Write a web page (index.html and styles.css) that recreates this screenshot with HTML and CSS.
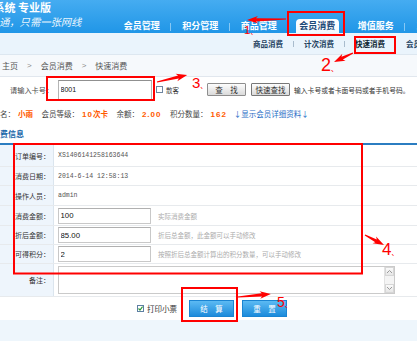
FILE: index.html
```html
<!DOCTYPE html>
<html lang="zh-CN">
<head>
<meta charset="utf-8">
<title>快速消费</title>
<link rel="stylesheet" href="styles.css">
</head>
<body>
<div class="page">
  <header class="topbar">
    <div class="brand">
      <div class="brand-title">会员管理系统 专业版</div>
      <div class="brand-sub">通，只需一张网线</div>
    </div>
    <nav class="mainnav">
      <a class="nav-item sep">会员管理</a>
      <a class="nav-item sep">积分管理</a>
      <a class="nav-item">商品管理</a>
      <a class="nav-item active"><span class="tab">会员消费</span></a>
      <a class="nav-item sep">增值服务</a>
      <a class="nav-item">系统设置</a>
    </nav>
  </header>

  <div class="subnav">
    <a class="sub-item sep">商品消费</a>
    <a class="sub-item sep">计次消费</a>
    <a class="sub-item sep current">快速消费</a>
    <a class="sub-item">会员充值</a>
  </div>

  <div class="crumbs">
    <span>主页</span><span class="gt">&gt;</span><span>会员消费</span><span class="gt">&gt;</span><span>快速消费</span>
  </div>

  <div class="search">
    <span class="search-label">请输入卡号：</span>
    <input class="card-input" value="8001">
    <span class="box"></span>
    <span class="guest">散客</span>
    <button class="btn-gray find">查　找</button>
    <button class="btn-gray quick">快速查找</button>
    <span class="search-hint">输入卡号或者卡面号码或者手机号码。</span>
  </div>

  <div class="member">
    <span class="grp first"><span class="mlbl">姓名：</span><b class="val">小雨</b></span>
    <span class="grp"><span class="mlbl">会员等级：</span><b class="val"><span class="digits">10</span>次卡</b></span>
    <span class="grp"><span class="mlbl">余额：</span><b class="val digits">2.00</b></span>
    <span class="grp"><span class="mlbl">积分数量：</span><b class="val digits">162</b></span>
    <a class="grp detail">↓显示会员详细资料↓</a>
  </div>

  <div class="section-title">消费信息</div>

  <div class="form">
    <div class="row h22"><div class="lbl">订单编号：</div><div class="cell mono">XS1406141258163644</div></div>
    <div class="row h19"><div class="lbl">消费日期：</div><div class="cell mono">2014-6-14 12:58:13</div></div>
    <div class="row h20"><div class="lbl">操作人员：</div><div class="cell mono">admin</div></div>
    <div class="row h20"><div class="lbl">消费金额：</div><div class="cell"><input class="field" value="100"><span class="hint">实际消费金额</span></div></div>
    <div class="row h19"><div class="lbl">折后金额：</div><div class="cell"><input class="field" value="85.00"><span class="hint">折后总金额，此金额可以手动修改</span></div></div>
    <div class="row h19"><div class="lbl">可得积分：</div><div class="cell"><input class="field" value="2"><span class="hint">按照折后总金额计算出的积分数量，可以手动修改</span></div></div>
    <div class="row h33"><div class="lbl">备注：</div><div class="cell">
      <div class="note">
        <div class="scroll">
          <span class="sbtn"><svg width="7" height="5" viewBox="0 0 7 5"><path d="M1 4 L3.5 1.5 L6 4" fill="none" stroke="#9a9a9a" stroke-width="1"/></svg></span>
          <span class="sbtn"><svg width="7" height="5" viewBox="0 0 7 5"><path d="M1 1 L3.5 3.5 L6 1" fill="none" stroke="#9a9a9a" stroke-width="1"/></svg></span>
        </div>
      </div>
    </div></div>
  </div>

  <div class="actions">
    <span class="box checked"><svg width="5" height="5" viewBox="0 0 5 5"><path d="M0.5 2.5 L2 4 L4.6 0.6" fill="none" stroke="#2e9a3a" stroke-width="1.2"/></svg></span>
    <span class="print">打印小票</span>
    <button class="btn-blue">结　算</button>
    <button class="btn-blue">重　置</button>
  </div>

  <div class="footer"></div>

  <svg class="marks" width="417" height="341" viewBox="0 0 417 341">
    <g fill="none" stroke="#ff0000" stroke-width="2">
      <rect x="288" y="12" width="56" height="23"/>
      <rect x="355" y="37" width="40" height="16"/>
      <rect x="47" y="77" width="107" height="23"/>
      <rect x="14" y="144" width="348" height="129.5"/>
      <rect x="182" y="288" width="55" height="33"/>
    </g>
    <g fill="#ff0000">
      <polygon transform="translate(286 19) rotate(178.5)" points="0,-0.6 30,-1.6 28,-3.8 39,0 28,3.8 30,1.6 0,0.6"/>
      <polygon transform="translate(353 53) rotate(154.6)" points="0,-0.6 12,-1.6 10,-3.8 21,0 10,3.8 12,1.6 0,0.6"/>
      <polygon transform="translate(157 82) rotate(-13.1)" points="0,-0.6 22,-1.6 20,-3.8 31,0 20,3.8 22,1.6 0,0.6"/>
      <polygon transform="translate(365 235) rotate(27.8)" points="0,-0.6 12.5,-1.6 10.5,-3.8 21.5,0 10.5,3.8 12.5,1.6 0,0.6"/>
      <polygon transform="translate(238 297) rotate(-5.2)" points="0,-0.6 24,-1.6 22,-3.8 33,0 22,3.8 24,1.6 0,0.6"/>
    </g>
  </svg>
  <span class="step s1">1<small>、</small></span>
  <span class="step s2">2<small>、</small></span>
  <span class="step s3">3<small>、</small></span>
  <span class="step s4">4<small>、</small></span>
  <span class="step s5">5<small>、</small></span>
</div>
</body>
</html>
```

FILE: styles.css
```css
* { box-sizing: border-box; margin: 0; padding: 0; }
html, body { width: 417px; height: 341px; overflow: hidden; }
body {
  font-family: "Noto Sans CJK SC", "Noto Sans", sans-serif;
  color: #333;
  background: #eef6fc;
}
a { text-decoration: none; }

.page {
  position: relative;
  width: 417px;
  height: 341px;
  overflow: hidden;
  display: flex;
  flex-direction: column;
  background: #fff;
}

/* ---------- top bar ---------- */
.topbar {
  flex: none;
  height: 33px;
  display: flex;
  background: linear-gradient(#45acf1, #2096e7);
  white-space: nowrap;
}
.brand {
  flex: none;
  width: 112.5px;
  overflow: hidden;
  color: #fff;
}
.brand-title {
  margin: 1px 0 0 -50.5px;
  font-size: 11px;
  font-weight: 700;
  line-height: 13px;
}
.brand-sub {
  margin: 2px 0 0 -1px;
  font-size: 10.3px;
  font-style: italic;
  line-height: 12px;
  color: rgba(255, 255, 255, 0.92);
}
.mainnav {
  align-self: flex-end;
  display: flex;
  height: 14px;
}
.nav-item {
  flex: none;
  width: 58.5px;
  height: 14px;
  text-align: center;
  font-size: 9px;
  font-weight: 700;
  line-height: 14px;
  color: #fff;
}
.nav-item.sep {
  background: linear-gradient(#86c8f4, #86c8f4) no-repeat right 4px / 1px 8px;
}
.nav-item .tab {
  display: block;
  width: 43px;
  height: 14px;
  margin: 0 auto;
  border-radius: 4px 4px 0 0;
  background: linear-gradient(#ffffff, #f2f8fe);
  color: #1d4a78;
}

/* ---------- sub nav ---------- */
.subnav {
  flex: none;
  height: 22px;
  display: flex;
  align-items: center;
  padding-left: 242.5px;
  background: #eaf4fc;
  border-bottom: 1px solid #dde7f0;
  white-space: nowrap;
}
.sub-item {
  flex: none;
  padding: 0 10.5px;
  font-size: 7.5px;
  font-weight: 700;
  line-height: 12px;
  color: #23425f;
}
.sub-item.sep {
  background: linear-gradient(#a9bccd, #a9bccd) no-repeat right 3px / 1px 6px;
}
.sub-item.current { color: #0d1e30; }

/* ---------- breadcrumb ---------- */
.crumbs {
  flex: none;
  height: 22px;
  display: flex;
  align-items: center;
  padding-left: 2px;
  background: #f6f9fc;
  border-bottom: 1px solid #e1e7ee;
  font-size: 8px;
  color: #555;
  white-space: nowrap;
}
.crumbs .gt {
  margin: 0 9px;
  font-family: "Liberation Sans", sans-serif;
  color: #8a8a8a;
}

/* ---------- search ---------- */
.search {
  flex: none;
  height: 25px;
  display: flex;
  align-items: center;
  padding-left: 10px;
  white-space: nowrap;
}
.search-label {
  width: 48px;
  font-size: 7.2px;
  color: #4a4a4a;
}
.card-input {
  width: 94px;
  height: 20px;
  padding: 0 0 0 1.5px;
  border: 1px solid #b5b5b5;
  border-top-color: #909090;
  font: 7px "Liberation Sans", sans-serif;
  color: #111;
  outline: none;
}
.box {
  flex: none;
  display: inline-flex;
  align-items: center;
  justify-content: center;
  width: 7px;
  height: 7px;
  border: 1px solid #6f86a0;
  background: #fff;
}
.search .box { margin-left: 4px; }
.guest {
  margin-left: 3px;
  font-size: 6.5px;
  color: #333;
}
.btn-gray {
  height: 13px;
  width: 39px;
  border: 1px solid #8e8e8e;
  border-radius: 1px;
  background: linear-gradient(#fdfdfd, #dadada);
  font-family: "Noto Sans CJK SC", sans-serif;
  font-size: 7.5px;
  line-height: 11px;
  color: #333;
}
.btn-gray.find { margin-left: 28px; }
.btn-gray.quick { margin-left: 5px; border-color: #777; }
.search-hint {
  margin-left: 4px;
  font-size: 6.8px;
  color: #333;
}

/* ---------- member info ---------- */
.member {
  flex: none;
  height: 22px;
  display: flex;
  align-items: center;
  margin-left: -7.5px;
  font-size: 7.5px;
  color: #444;
  white-space: nowrap;
}
.grp { margin-left: 8.5px; }
.grp.first { margin-left: 0; }
.val {
  margin-left: 3px;
  font-weight: 700;
  color: #ff5a00;
}
.digits {
  font-family: "Liberation Sans", sans-serif;
  font-size: 8px;
  letter-spacing: 1px;
}
.detail {
  margin-left: 7px;
  color: #1f6dc6;
}

/* ---------- section title ---------- */
.section-title {
  flex: none;
  height: 21px;
  margin-left: -8px;
  font-size: 8px;
  font-weight: 700;
  line-height: 19px;
  color: #1766a8;
  border-bottom: 2px solid #2b7dc1;
}

/* ---------- form table ---------- */
.form {
  flex: none;
  display: flex;
  flex-direction: column;
}
.row {
  display: grid;
  grid-template-columns: 54px 1fr;
  border-bottom: 1px solid #e7eaed;
}
.h19 { height: 19px; }
.h20 { height: 20px; }
.h22 { height: 22px; }
.h33 { height: 33px; }
.lbl {
  display: flex;
  align-items: center;
  justify-content: flex-end;
  padding-right: 3px;
  background: #eef5fc;
  border-right: 1px solid #dbe5ee;
  font-size: 7px;
  color: #333;
  white-space: nowrap;
}
.cell {
  display: flex;
  align-items: center;
  padding-left: 4px;
  white-space: nowrap;
}
.mono {
  font-family: "Liberation Mono", monospace;
  font-size: 6.5px;
  color: #555;
}
.field {
  width: 93px;
  height: 16px;
  padding: 0 0 0 1.5px;
  border: 1px solid #c8c8c8;
  border-top-color: #b0b0b0;
  font: 7.8px "Liberation Sans", sans-serif;
  color: #111;
  outline: none;
}
.hint {
  margin-left: 7px;
  font-size: 6.5px;
  color: #ababab;
}
.note {
  width: 337px;
  height: 28px;
  display: flex;
  justify-content: flex-end;
  border: 1px solid #cacaca;
  background: #fff;
}
.scroll {
  width: 10px;
  display: flex;
  flex-direction: column;
  justify-content: space-between;
  background: #f4f4f4;
  border-left: 1px solid #e2e2e2;
}
.sbtn {
  height: 9px;
  display: flex;
  align-items: center;
  justify-content: center;
  background: linear-gradient(#fafafa, #e6e6e6);
  border: 1px solid #d6d6d6;
}

/* ---------- actions ---------- */
.actions {
  flex: none;
  height: 23px;
  display: flex;
  align-items: center;
  padding-left: 137px;
  background: #fff;
  white-space: nowrap;
}
.box.checked { border-color: #5d7fa3; }
.print {
  margin-left: 3px;
  font-size: 7.5px;
  color: #333;
}
.btn-blue {
  width: 45px;
  height: 17px;
  margin-left: 8px;
  border: 1px solid #1a84d2;
  background: linear-gradient(#5cbaf3, #1c8bdb);
  font-family: "Noto Sans CJK SC", sans-serif;
  font-size: 7.5px;
  line-height: 15px;
  color: #fff;
}
.print + .btn-blue { margin-left: 12px; }

.footer {
  flex: 1;
  background: #eef6fc;
}

/* ---------- red tutorial marks (overlay) ---------- */
.marks {
  position: absolute;
  left: 0;
  top: 0;
  pointer-events: none;
}
.step {
  position: absolute;
  font-family: "Liberation Sans", sans-serif;
  line-height: 1;
  color: #ff0000;
  white-space: nowrap;
}
.step small {
  font-family: "Noto Sans CJK SC", sans-serif;
  font-size: 7px;
}
.s1 { left: 244px; top: 25px; font-size: 11.5px; }
.s2 { left: 321px; top: 55.5px; font-size: 18px; }
.s3 { left: 192px; top: 75px; font-size: 15px; }
.s4 { left: 382px; top: 241px; font-size: 17px; }
.s5 { left: 277px; top: 295px; font-size: 14px; }
```
